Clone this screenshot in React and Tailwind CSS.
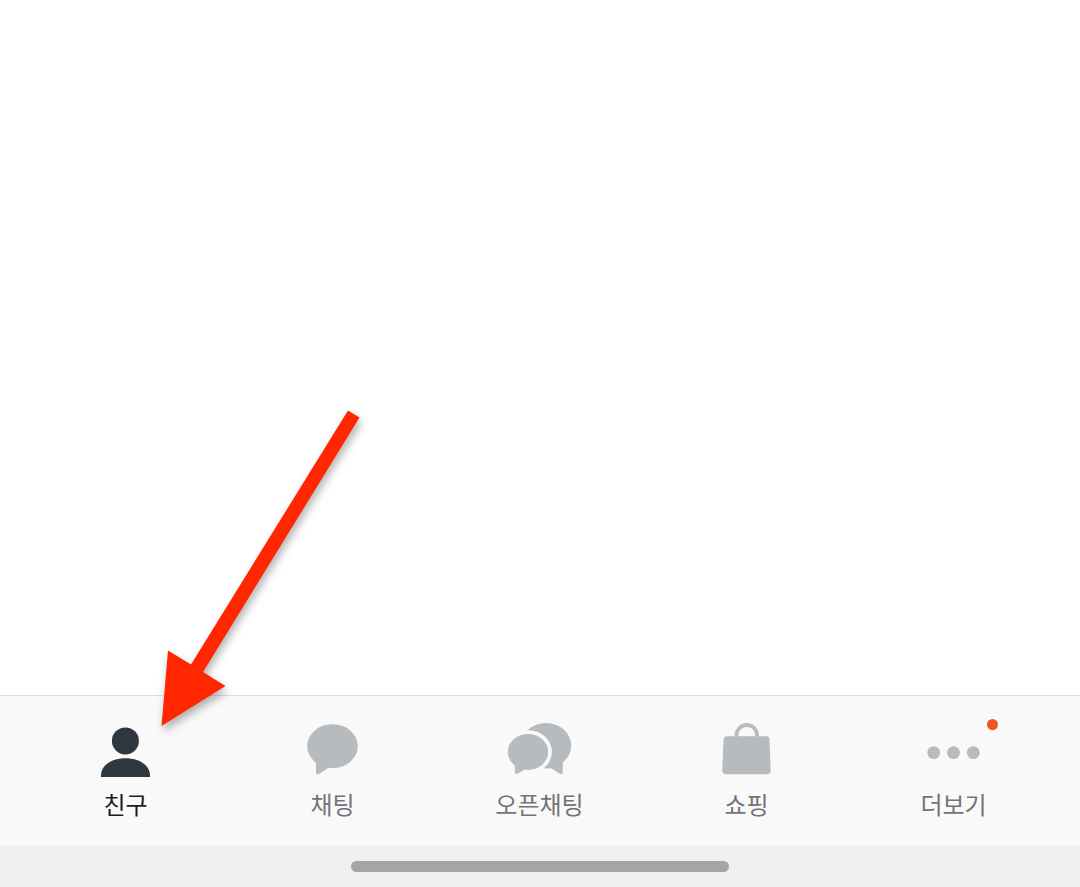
import { useState } from "react";
import clsx from "clsx";

const FriendsIcon = () => (
    <>
        <circle cx="36.4" cy="20.9" r="13.5" />
        <path d="M12 57v-1.5C12 45.5 22.5 38.3 36.5 38.3S61 45.5 61 55.5V57z" />
    </>
);

const ChatIcon = () => (
    <>
        <ellipse cx="36.5" cy="26.2" rx="25.3" ry="22" />
        <path d="M20 40v12.6c0 1.8 1.7 2.5 3 1.5L32.5 47.7l3.5-6z" />
    </>
);

const OpenChatIcon = () => (
    <>
        <mask id="front-bubble-gap">
            <rect width="73" height="64" fill="#fff" />
            <ellipse cx="25" cy="31.8" rx="23.9" ry="21.6" fill="#000" />
            <rect y="32" width="36" height="32" fill="#000" />
        </mask>
        <g mask="url(#front-bubble-gap)">
            <ellipse cx="43" cy="25.6" rx="25.2" ry="22.6" />
            <path d="M59.8 40v12.2c0 1.7-1.7 2.4-3 1.5L48 48.3h-7.5L38 44z" />
        </g>
        <ellipse cx="25" cy="31.9" rx="20.2" ry="18" />
        <path d="M11.8 43v9c0 1.7 1.6 2.5 3 1.6l7.2-4.2 2-6.4z" />
    </>
);

const ShoppingIcon = () => (
    <>
        <path d="M16.8 16.3h39.4c1.8 0 3.1 1.2 3.2 3L60.8 50.2c.1 2.4-1.5 4.1-3.9 4.1H16.1c-2.4 0-4-1.7-3.9-4.1l1.4-30.9c.1-1.8 1.4-3 3.2-3z" />
        <path
            d="M26.5 17.5v-2.2a10.3 10.3 0 0 1 20.6 0v2.2"
            fill="none"
            stroke="currentColor"
            strokeWidth="3.8"
        />
    </>
);

const MoreIcon = () => (
    <>
        <circle cx="16.7" cy="32.6" r="6.4" />
        <circle cx="36.5" cy="32.6" r="6.4" />
        <circle cx="56.3" cy="32.6" r="6.4" />
    </>
);

const tabs = [
    { id: "friends", label: "친구", Icon: FriendsIcon },
    { id: "chats", label: "채팅", Icon: ChatIcon },
    { id: "open-chats", label: "오픈채팅", Icon: OpenChatIcon },
    { id: "shopping", label: "쇼핑", Icon: ShoppingIcon },
    { id: "more", label: "더보기", Icon: MoreIcon, badge: true },
];

const TabButton = ({ tab, active, onSelect }) => {
    const { label, Icon, badge } = tab;

    return (
        <button
            type="button"
            aria-current={active ? "page" : undefined}
            onClick={() => onSelect(tab.id)}
            className="flex flex-col items-center gap-1 pt-6 pb-[25px]"
        >
            <span className="relative">
                <svg
                    viewBox="0 0 73 64"
                    fill="currentColor"
                    aria-hidden="true"
                    className={clsx("h-16 w-[73px]", active ? "text-[#2f3840]" : "text-[#b7bbbe]")}
                >
                    <Icon />
                </svg>
                {badge && (
                    <span className="absolute -top-px -right-2 size-[11px] rounded-full bg-[#f0561f]" />
                )}
            </span>
            <span
                className={clsx(
                    "text-2xl leading-8",
                    active ? "text-[#1c1c22]" : "text-[#737478]"
                )}
            >
                {label}
            </span>
        </button>
    );
};

const PointerArrow = () => (
    <svg
        viewBox="140 400 240 340"
        aria-hidden="true"
        className="pointer-events-none absolute bottom-[147px] left-[140px] h-[340px] w-[240px] drop-shadow-[2px_5px_4px_rgba(0,0,0,0.3)]"
    >
        <path
            d="M161.5 726L168 650.5l23 14L348 410.5l11.5 7L203 672l22.5 14z"
            fill="#ff2600"
        />
    </svg>
);

const App = () => {
    const [activeTab, setActiveTab] = useState("friends");

    return (
        <div className="relative flex min-h-screen flex-col bg-white font-['Noto_Sans_CJK_KR',sans-serif]">
            <main className="flex-1" />
            <nav className="grid grid-cols-5 border-t border-[#dcdcdd] bg-[#f9f9f9] pr-[23px] pl-[22px]">
                {tabs.map((tab) => (
                    <TabButton
                        key={tab.id}
                        tab={tab}
                        active={tab.id === activeTab}
                        onSelect={setActiveTab}
                    />
                ))}
            </nav>
            <footer className="flex justify-center bg-[#f0f0f2] pt-4 pb-[15px]">
                <div className="h-[11px] w-[35%] rounded-full bg-[#a5a5a7]" />
            </footer>
            <PointerArrow />
        </div>
    );
};

export default App;
